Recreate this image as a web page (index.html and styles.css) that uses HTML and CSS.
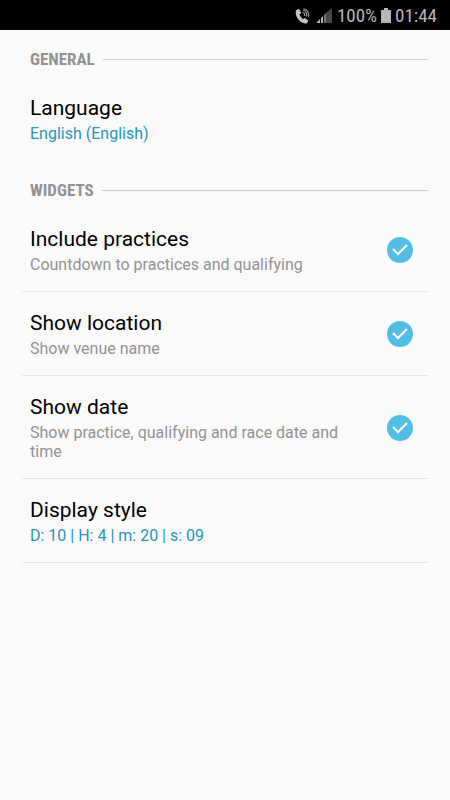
FILE: index.html
```html
<!DOCTYPE html>
<html lang="en">
<head>
<meta charset="utf-8">
<meta name="viewport" content="width=device-width, initial-scale=1">
<title>Settings</title>
<link rel="stylesheet" href="styles.css">
</head>
<body>
<header class="status">
  <svg class="call" width="16" height="16" viewBox="0 0 16 16" aria-hidden="true">
    <path fill="#c4c4c4" d="M1 2.200 3.900.7 6.300 4.700 4.500 6.400C5.200 8.400 6.300 9.800 8 11l2-1 3.400 2.700-1.700 2.700C6.300 16.600-.9 9 1 2.200Z"/>
    <g fill="none" stroke="#9a9a9a" stroke-width="1.200"><path d="M7.500 4.500q2.500.4 2 3.500M8 2.500q4.300.8 3.500 6M8.500.8q6 1.200 5 8"/></g>
  </svg>
  <svg class="signal" width="15" height="15" viewBox="0 0 15 15" aria-hidden="true">
    <path fill="#b5b5b5" d="M0 15v-1l3-3v4ZM4 15v-5l2-2v7Z"/>
    <path fill="#777" d="M7 15V7l2-2v10Z"/>
    <path fill="#484848" d="M9 15V5l6-5v15Z"/>
  </svg>
  <span>100%</span>
  <svg class="battery" width="10" height="15" viewBox="0 0 10 15" aria-hidden="true">
    <path fill="#b5b5b5" d="M3 0h4v2h3v13H0V2h3Z"/>
  </svg>
  <time>01:44</time>
</header>
<main class="settings">
  <section>
    <h2 class="heading">GENERAL</h2>
    <button type="button" class="row">
      <span class="text"><span class="title">Language</span><span class="value">English (English)</span></span>
    </button>
  </section>
  <section>
    <h2 class="heading">WIDGETS</h2>
    <label class="row divided">
      <span class="text"><span class="title">Include practices</span><span class="summary">Countdown to practices and qualifying</span></span>
      <span class="check"><input type="checkbox" checked><svg viewBox="0 0 26 26" aria-hidden="true"><path d="m6 12 5 5 9-9"/></svg></span>
    </label>
    <label class="row divided">
      <span class="text"><span class="title">Show location</span><span class="summary">Show venue name</span></span>
      <span class="check"><input type="checkbox" checked><svg viewBox="0 0 26 26" aria-hidden="true"><path d="m6 12 5 5 9-9"/></svg></span>
    </label>
    <label class="row divided">
      <span class="text"><span class="title">Show date</span><span class="summary">Show practice, qualifying and race date and time</span></span>
      <span class="check"><input type="checkbox" checked><svg viewBox="0 0 26 26" aria-hidden="true"><path d="m6 12 5 5 9-9"/></svg></span>
    </label>
    <button type="button" class="row divided">
      <span class="text"><span class="title">Display style</span><span class="value">D: 10 | H: 4 | m: 20 | s: 09</span></span>
    </button>
  </section>
</main>
</body>
</html>
```
FILE: styles.css
```css
* { box-sizing: border-box; }
body {
  margin: 0;
  background: #fafafa;
  color: #000;
  font-family: Roboto, sans-serif;
}
.status {
  display: flex;
  align-items: center;
  justify-content: flex-end;
  gap: 4px;
  height: 30px;
  padding: 1px 13px 0 0;
  background: #000;
  color: #b5b5b5;
  font: 19px/28px "Roboto Condensed", "Liberation Sans Narrow", Roboto, sans-serif;
}
.call { margin-right: 2px; }
.signal { margin-right: 1px; }
.settings { padding: 0 22px; }
.heading {
  display: flex;
  align-items: center;
  gap: 8px;
  height: 36px;
  margin: 11px 0 0;
  padding-left: 8px;
  color: #929292;
  font: bold 17px/20px "Roboto Condensed", "Liberation Sans Narrow", Roboto, sans-serif;
}
.heading::after {
  content: "";
  flex: 1;
  height: 1px;
  background: #cbcbcb;
}
.row {
  display: flex;
  align-items: center;
  justify-content: space-between;
  width: 100%;
  padding: 18px 15px 17px 8px;
  border: 0;
  border-bottom: 1px solid transparent;
  background: none;
  color: inherit;
  font: 16px/19px Roboto, sans-serif;
  text-align: left;
  cursor: pointer;
}
.divided { border-color: #e6e6e6; }
.text { max-width: 330px; }
.title, .summary, .value { display: block; }
.title {
  margin-bottom: 2px;
  font-size: 21px;
  line-height: 27px;
}
.summary { color: #929292; }
.value { color: #2796ba; }
.check {
  position: relative;
  flex: none;
  width: 26px;
  height: 26px;
}
.check input {
  appearance: none;
  display: block;
  width: 26px;
  height: 26px;
  margin: 0;
  border: 2px solid #9a9a9a;
  border-radius: 50%;
}
.check input:checked {
  border-color: #52bde5;
  background: #52bde5;
}
.check svg {
  position: absolute;
  inset: 0;
  fill: none;
  stroke: #fff;
  stroke-width: 2;
  pointer-events: none;
}
```
